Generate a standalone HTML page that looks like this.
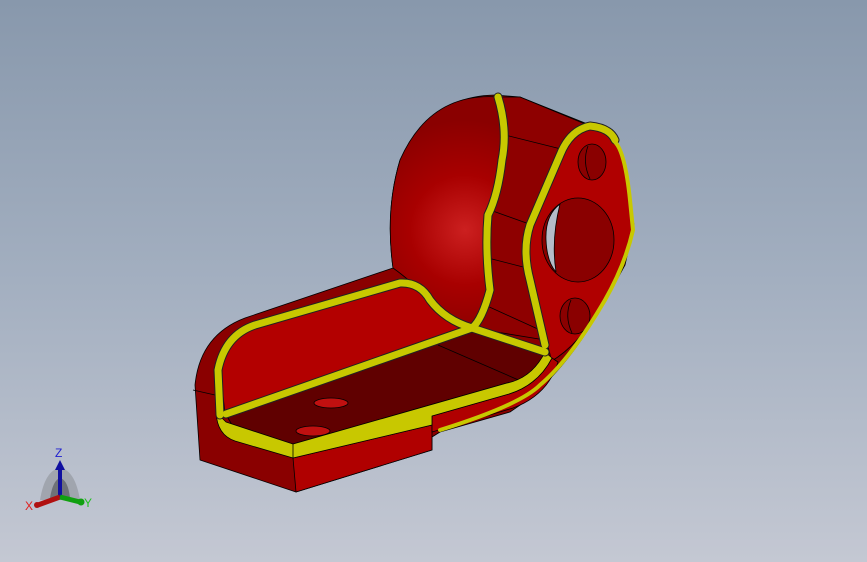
<!DOCTYPE html>
<html><head><meta charset="utf-8"><style>
html,body{margin:0;padding:0;width:867px;height:562px;overflow:hidden}
body{background:linear-gradient(180deg,#8898ac 0%,#a3afc0 50%,#c4c8d3 100%)}
svg{position:absolute;left:0;top:0}
</style></head><body>
<svg width="867" height="562" viewBox="0 0 867 562">
<defs>
<radialGradient id="cyl" cx="465" cy="230" r="110" gradientUnits="userSpaceOnUse">
<stop offset="0" stop-color="#cc2020"/><stop offset="0.5" stop-color="#a80000"/><stop offset="1" stop-color="#8a0000"/>
</radialGradient>
</defs>
<g stroke="#000" stroke-width="0.8" stroke-linejoin="round">
<path d="M200,460 L296,492 L432,450 L432,437 L440,432 L510,412 Q560,380 600,310 L625,265 L634,225 L620,150 Q610,128 590,125 L520,97 L495,95 Q430,96 400,160 Q385,210 393,268 L245,318 Q200,335 195,385 Z" fill="#8a0000"/>
<path d="M498,97 L520,97 L590,126 Q570,130 560,155 L530,225 Q522,250 530,280 L545,340 L472,328 Q482,320 490,290 Q485,250 488,215 Q498,195 502,160 Q508,130 498,97Z" fill="#8e0000"/>
<path d="M505,135 L565,150 M490,210 L532,225 M488,258 L527,268 M485,305 L540,330" fill="none"/>
<path d="M498,97 Q430,92 400,160 Q385,210 393,268 Q410,280 430,300 Q445,320 472,328 Q482,320 490,290 Q485,250 488,215 Q498,195 502,160 Q508,130 498,97Z" fill="url(#cyl)"/>
<path d="M590,126 Q610,128 615,140 Q625,150 630,200 L633,230 Q625,265 605,300 Q580,345 550,362 Q552,355 545,340 L530,280 Q522,250 530,225 L560,155 Q570,130 590,126Z" fill="#b00000"/>
<ellipse cx="592" cy="162" rx="14" ry="18" fill="#8a0000"/>
<path d="M588,146 Q582,162 590,179" fill="none"/>
<ellipse cx="578" cy="240" rx="36" ry="42" fill="#8a0000"/>
<path d="M560,204 Q545,215 546,240 Q547,262 556,272 Q551,240 560,204Z" fill="#b5bcc8"/>
<ellipse cx="575" cy="316" rx="15" ry="18" fill="#8a0000"/>
<path d="M571,300 Q564,316 572,333" fill="none"/>
<path d="M255,325 L400,283 Q420,282 430,300 Q445,320 472,328 L225,413 L220,370 Q225,335 255,325 Z" fill="#b30000"/>
<path d="M225,413 L472,328 L545,355 Q530,380 507,383 L293,444 L235,430 Z" fill="#600000"/>
<path d="M438,345 L530,385" fill="none"/>
<ellipse cx="331" cy="403" rx="17" ry="5" fill="#c01010"/>
<ellipse cx="313" cy="431" rx="17" ry="5" fill="#c01010"/>
<path d="M293,458 L432,425 L432,450 L296,492 Z" fill="#b00000"/>
<path d="M193,390 L215,395" fill="none"/>
<path d="M432,416 L509,394 Q538,385 552,358 L558,362 Q548,395 513,408 L432,432 Z" fill="#b00000"/>
<path d="M216,412 Q217,435 235,441 L293,458 L432,425 L432,416 L509,394 Q538,385 552,358 L545,352 Q532,378 507,383 L293,444 L226,422 Z" fill="#c8c800"/>
<path d="M293,444 L293,458" fill="none"/>
</g>
<g fill="none" stroke-linecap="round" stroke-linejoin="round">
<g stroke="#222" stroke-width="9">
<path d="M472,328 Q445,320 430,300 Q420,282 400,283 L255,325 Q225,335 218,370 L220,415"/>
<path d="M545,345 L530,280 Q522,250 530,225 L560,155 Q570,130 590,126 Q610,128 615,140"/>
<path d="M498,97 Q508,130 502,160 Q498,195 488,215 Q485,250 490,290 Q482,320 472,328 L545,352"/>
<path d="M226,414 L472,328"/>
</g>
<g stroke="#c8c800" stroke-width="7">
<path d="M472,328 Q445,320 430,300 Q420,282 400,283 L255,325 Q225,335 218,370 L220,415"/>
<path d="M545,345 L530,280 Q522,250 530,225 L560,155 Q570,130 590,126 Q610,128 615,140"/>
<path d="M498,97 Q508,130 502,160 Q498,195 488,215 Q485,250 490,290 Q482,320 472,328 L545,352"/>
<path d="M226,414 L472,328"/>
</g>
<path d="M615,142 Q625,152 630,200 L633,230 Q625,265 605,300 Q570,360 540,385 Q520,405 440,430" stroke="#c8c800" stroke-width="4"/>
</g>
<g>
<path d="M40,500 Q45,470 60,468 Q75,470 80,500 Z" fill="#9a9ea6" opacity="0.8"/>
<path d="M50,498 Q53,480 60,478 Q68,480 70,498 Z" fill="#6e7278"/>
<line x1="60" y1="497" x2="60" y2="468" stroke="#1010a0" stroke-width="4"/>
<path d="M55,470 L60,460 L65,470Z" fill="#1010a0"/>
<line x1="60" y1="497" x2="38" y2="505" stroke="#b01010" stroke-width="5"/>
<circle cx="37" cy="505" r="3" fill="#b01010"/>
<line x1="60" y1="497" x2="80" y2="502" stroke="#10a010" stroke-width="5"/>
<circle cx="81" cy="502" r="3.5" fill="#10a010"/>
<text x="55" y="457" font-family="Liberation Sans, sans-serif" font-size="12" fill="#2020d0">Z</text>
<text x="25" y="510" font-family="Liberation Sans, sans-serif" font-size="12" fill="#e02020">X</text>
<text x="84" y="507" font-family="Liberation Sans, sans-serif" font-size="12" fill="#20c020">Y</text>
</g>
</svg>
</body></html>
